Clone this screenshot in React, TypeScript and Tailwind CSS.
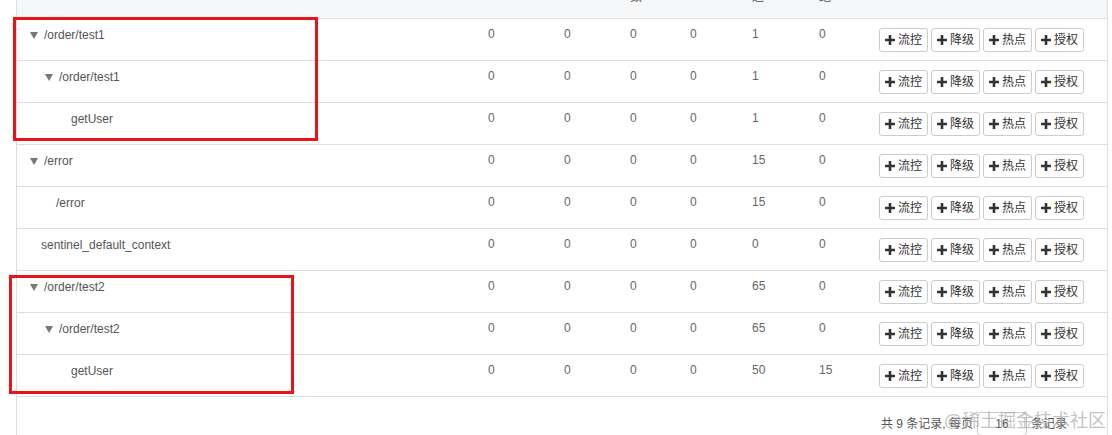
type Row = {
  name: string;
  level: number;
  open: boolean;
  leaf: boolean;
  vals: string[];
};

const rows: Row[] = [
  { name: '/order/test1', level: 1, open: true, leaf: false, vals: ['0', '0', '0', '0', '1', '0'] },
  { name: '/order/test1', level: 2, open: true, leaf: false, vals: ['0', '0', '0', '0', '1', '0'] },
  { name: 'getUser', level: 3, open: false, leaf: true, vals: ['0', '0', '0', '0', '1', '0'] },
  { name: '/error', level: 1, open: true, leaf: false, vals: ['0', '0', '0', '0', '15', '0'] },
  { name: '/error', level: 2, open: false, leaf: true, vals: ['0', '0', '0', '0', '15', '0'] },
  { name: 'sentinel_default_context', level: 1, open: false, leaf: true, vals: ['0', '0', '0', '0', '0', '0'] },
  { name: '/order/test2', level: 1, open: true, leaf: false, vals: ['0', '0', '0', '0', '65', '0'] },
  { name: '/order/test2', level: 2, open: true, leaf: false, vals: ['0', '0', '0', '0', '65', '0'] },
  { name: 'getUser', level: 3, open: false, leaf: true, vals: ['0', '0', '0', '0', '50', '15'] },
];

// indentation per tree level
const branchPad: Record<number, string> = { 1: 'pl-[13px]', 2: 'pl-[28px]', 3: 'pl-[43px]' };
const leafPad: Record<number, string> = { 1: 'pl-[24px]', 2: 'pl-[39px]', 3: 'pl-[54px]' };

const cols = 'grid grid-cols-[471px_76px_66px_60px_62px_67px_60px_1fr]';

function Caret() {
  return (
    <svg width="8" height="7" viewBox="0 0 8 7" className="mr-[6px] mt-[1px] shrink-0">
      <path d="M0 0 H8 L4 7 Z" fill="#777" />
    </svg>
  );
}

function Plus() {
  return (
    <svg width="10" height="10" viewBox="0 0 10 10" className="mr-[3px] shrink-0">
      <path d="M3.7 0 H6.3 V3.7 H10 V6.3 H6.3 V10 H3.7 V6.3 H0 V3.7 H3.7 Z" fill="#333" />
    </svg>
  );
}

function ActionButton({ label }: { label: string }) {
  return (
    <button className="flex h-[24px] w-[49px] items-center justify-center rounded-[3px] border border-[#ccc] bg-white text-[12px] text-[#333]">
      <Plus />
      {label}
    </button>
  );
}

function TableRow({ row }: { row: Row }) {
  return (
    <div className={`${cols} h-[42px] border-b border-[#ddd]`}>
      <div
        className={`flex items-center h-[17px] mt-[7px] text-[12px] text-[#555] ${row.leaf ? leafPad[row.level] : branchPad[row.level]}`}
      >
        {!row.leaf && <Caret />}
        <span>{row.name}</span>
      </div>
      {row.vals.map((v, i) => (
        <div key={i} className="mt-[7px] h-[17px] text-[12px] leading-[17px] text-[#666]">
          {v}
        </div>
      ))}
      <div className="flex gap-[3px] pt-[9px]">
        <ActionButton label="流控" />
        <ActionButton label="降级" />
        <ActionButton label="热点" />
        <ActionButton label="授权" />
      </div>
    </div>
  );
}

export default function App() {
  return (
    <div
      className="relative h-[435px] w-[1112px] overflow-hidden bg-white"
      style={{ fontFamily: '"Liberation Sans", Arial, "Noto Sans CJK SC", sans-serif' }}
    >
      <div className="ml-[16px] h-full w-[1092px] border-x border-[#ddd]">
        <div className={`${cols} h-[19px] overflow-hidden border-b border-[#e2e2e2] bg-[#f5f6f8] text-[12px] text-[#555]`}>
          <div />
          <div />
          <div />
          <div className="-mt-[11px] leading-[17px]">数</div>
          <div />
          <div className="-mt-[11px] leading-[17px]">过</div>
          <div className="-mt-[11px] leading-[17px]">绝</div>
          <div />
        </div>

        {rows.map((r, i) => (
          <TableRow key={i} row={r} />
        ))}

        <div className="flex items-center justify-end pr-[40px] pt-[15px] text-[12px] text-[#555]">
          <span>共 9 条记录, 每页</span>
          <div className="mx-[4px] flex h-[24px] w-[50px] items-center justify-center rounded-[4px] border border-[#ccc]">
            16
          </div>
          <span>条记录</span>
        </div>
      </div>

      {/* annotation boxes */}
      <div className="absolute left-[13px] top-[17px] h-[124px] w-[305px] border-[3px] border-[#e8141a]" />
      <div className="absolute left-[9px] top-[275px] h-[119px] w-[285px] border-[3px] border-[#e8141a]" />

      {/* watermark */}
      <div className="pointer-events-none absolute bottom-[2px] right-[6px] text-[18px] leading-[24px] text-[#9a9a9a]/60">
        @稀土掘金技术社区
      </div>
    </div>
  );
}
